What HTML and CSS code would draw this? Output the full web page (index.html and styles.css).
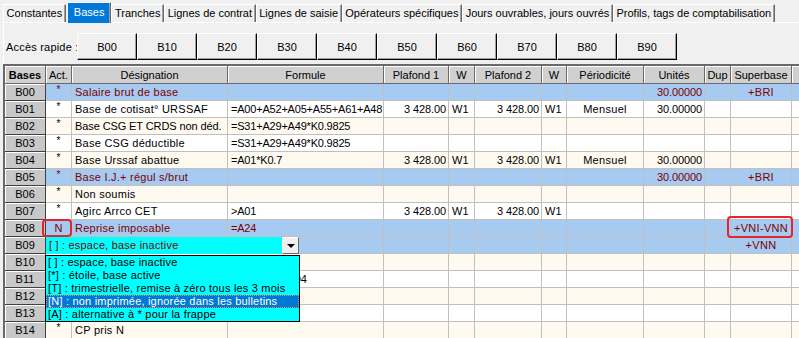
FILE: index.html
```html
<!DOCTYPE html>
<html>
	<head>
		<meta charset="UTF-8">
		<title>Bases</title>
		<link rel="stylesheet" href="styles.css">
	</head>
	<body>
		<div class="tabs">
			<span class="tab">Constantes</span>
			<span class="tab active">Bases</span>
			<span class="tab">Tranches</span>
			<span class="tab">Lignes de contrat</span>
			<span class="tab">Lignes de saisie</span>
			<span class="tab">Opérateurs spécifiques</span>
			<span class="tab">Jours ouvrables, jours ouvrés</span>
			<span class="tab">Profils, tags de comptabilisation</span>
		</div>
		<div class="panel">
			<div class="quick">
				<span class="quick-label">Accès rapide :</span>
				<button>B00</button>
				<button>B10</button>
				<button>B20</button>
				<button>B30</button>
				<button>B40</button>
				<button>B50</button>
				<button>B60</button>
				<button>B70</button>
				<button>B80</button>
				<button>B90</button>
			</div>
			<div class="grid-wrap">
				<table class="grid">
					<colgroup>
						<col style="width:41px">
						<col style="width:26px">
						<col style="width:156px">
						<col style="width:156px">
						<col style="width:65px">
						<col style="width:26px">
						<col style="width:67px">
						<col style="width:25px">
						<col style="width:77px">
						<col style="width:61px">
						<col style="width:26px">
						<col style="width:61px">
						<col style="width:60px">
					</colgroup>
					<thead>
						<tr>
							<th class="first">Bases</th>
							<th>Act.</th>
							<th>Désignation</th>
							<th>Formule</th>
							<th>Plafond 1</th>
							<th>W</th>
							<th>Plafond 2</th>
							<th>W</th>
							<th>Périodicité</th>
							<th>Unités</th>
							<th>Dup</th>
							<th>Superbase</th>
							<th>Dé</th>
						</tr>
					</thead>
					<tbody>
						<tr class="sel">
							<th>B00</th><td class="act">*</td><td class="lbl">Salaire brut de base</td><td class="fx"></td><td></td><td></td><td></td><td></td><td></td><td class="num">30.00000</td><td></td><td class="mid">+BRI</td><td></td>
						</tr>
						<tr>
							<th>B01</th><td class="act">*</td><td class="lbl">Base de cotisat° URSSAF</td><td class="fx">=A00+A52+A05+A55+A61+A48</td><td class="num">3 428.00</td><td>W1</td><td class="num">3 428.00</td><td>W1</td><td class="mid">Mensuel</td><td class="num">30.00000</td><td></td><td></td><td></td>
						</tr>
						<tr class="alt">
							<th>B02</th><td class="act">*</td><td class="lbl tight">Base CSG ET CRDS non déd.</td><td class="fx">=S31+A29+A49*K0.9825</td><td></td><td></td><td></td><td></td><td></td><td></td><td></td><td></td><td></td>
						</tr>
						<tr>
							<th>B03</th><td class="act">*</td><td class="lbl">Base CSG déductible</td><td class="fx">=S31+A29+A49*K0.9825</td><td></td><td></td><td></td><td></td><td></td><td></td><td></td><td></td><td></td>
						</tr>
						<tr class="alt">
							<th>B04</th><td class="act">*</td><td class="lbl">Base Urssaf abattue</td><td class="fx">=A01*K0.7</td><td class="num">3 428.00</td><td>W1</td><td class="num">3 428.00</td><td>W1</td><td class="mid">Mensuel</td><td class="num">30.00000</td><td></td><td></td><td></td>
						</tr>
						<tr class="sel">
							<th>B05</th><td class="act">*</td><td class="lbl">Base I.J.+ régul s/brut</td><td class="fx"></td><td></td><td></td><td></td><td></td><td></td><td class="num">30.00000</td><td></td><td class="mid">+BRI</td><td></td>
						</tr>
						<tr class="alt">
							<th>B06</th><td class="act">*</td><td class="lbl">Non soumis</td><td class="fx"></td><td></td><td></td><td></td><td></td><td></td><td></td><td></td><td></td><td></td>
						</tr>
						<tr>
							<th>B07</th><td class="act">*</td><td class="lbl">Agirc Arrco CET</td><td class="fx">&gt;A01</td><td class="num">3 428.00</td><td>W1</td><td class="num">3 428.00</td><td>W1</td><td></td><td></td><td></td><td></td><td></td>
						</tr>
						<tr class="sel">
							<th>B08</th><td class="act open"><span class="flag">N</span><span class="mark"></span></td><td class="lbl">Reprise imposable</td><td class="fx">=A24</td><td></td><td></td><td></td><td></td><td></td><td></td><td></td><td class="mid open">+VNI-VNN<span class="mark"></span></td><td></td>
						</tr>
						<tr class="sel">
							<th>B09</th>
							<td class="act open">
								<div class="combo">
									<span class="combo-text">[ ] : espace, base inactive</span>
									<span class="combo-btn"></span>
								</div>
								<ul class="droplist">
									<li>[ ] : espace, base inactive</li>
									<li>[*] : étoile, base active</li>
									<li>[T] : trimestrielle, remise à zéro tous les 3 mois</li>
									<li class="hot">[N] : non imprimée, ignorée dans les bulletins</li>
									<li>[A] : alternative à * pour la frappe</li>
								</ul>
							</td>
							<td class="lbl"></td><td class="fx"></td><td></td><td></td><td></td><td></td><td></td><td></td><td></td><td class="mid">+VNN</td><td></td>
						</tr>
						<tr class="alt">
							<th>B10</th><td class="act"></td><td class="lbl"></td><td class="fx"></td><td></td><td></td><td></td><td></td><td></td><td></td><td></td><td></td><td></td>
						</tr>
						<tr>
							<th>B11</th><td class="act"></td><td class="lbl"></td><td class="fx">=A01+A02+A04</td><td></td><td></td><td></td><td></td><td></td><td></td><td></td><td></td><td></td>
						</tr>
						<tr class="alt">
							<th>B12</th><td class="act"></td><td class="lbl"></td><td class="fx"></td><td></td><td></td><td></td><td></td><td></td><td></td><td></td><td></td><td></td>
						</tr>
						<tr>
							<th>B13</th><td class="act"></td><td class="lbl"></td><td class="fx"></td><td></td><td></td><td></td><td></td><td></td><td></td><td></td><td></td><td></td>
						</tr>
						<tr class="alt">
							<th>B14</th><td class="act">*</td><td class="lbl">CP pris N</td><td class="fx"></td><td></td><td></td><td></td><td></td><td></td><td></td><td></td><td></td><td></td>
						</tr>
					</tbody>
				</table>
			</div>
		</div>
	</body>
</html>
```

FILE: styles.css
```css
html, body {
	margin: 0;
	height: 100%;
	overflow: hidden;
}

body {
	background: #f0f0f0;
	font: 11px "Liberation Sans", Arial, sans-serif;
	color: #000;
}

/* onglets ---------------------------------------------------- */
.tabs {
	display: flex;
	align-items: flex-end;
	height: 22px;
	padding: 0 0 0 3px;
	box-sizing: border-box;
}

.tab {
	height: 18px;
	line-height: 16px;
	padding: 0 2.6px;
	border-top: 1px solid #fff;
	border-left: 1px solid #fff;
	border-right: 1px solid #696969;
	box-shadow: inset -1px 0 #a0a0a0;
	box-sizing: border-box;
	white-space: nowrap;
}

.tab.active {
	height: 21px;
	line-height: 18px;
	background: #0078d7;
	color: #fff;
	margin: 0 0 -1px 1px;
	padding: 0 6px;
}

/* panneau ---------------------------------------------------- */
.panel {
	border-top: 1px solid #fff;
	border-left: 1px solid #fff;
	margin-left: 3px;
	height: 316px;
}

.quick {
	display: flex;
	align-items: center;
	padding: 10px 0 0 2px;
	height: 27px;
}

.quick-label {
	width: 71px;
	white-space: nowrap;
	letter-spacing: 0.2px;
}

.quick button {
	width: 60px;
	height: 27px;
	font: 11px "Liberation Sans", Arial, sans-serif;
	background: #f0f0f0;
	border: 1px solid;
	border-color: #fff #000 #000 #fff;
	box-shadow: inset -1px -1px #a0a0a0;
	padding: 0;
}

/* grille ----------------------------------------------------- */
.grid-wrap {
	margin: 4px 0 0 -1px;
	border-top: 2px solid #696969;
	border-left: 2px solid #696969;
	box-shadow: inset 1px 1px #222;
	height: 280px;
	overflow: hidden;
}

.grid {
	table-layout: fixed;
	border-collapse: separate;
	border-spacing: 0;
	width: 847px;
}

.grid th,
.grid td {
	box-sizing: border-box;
	height: 17px;
	padding: 0 3px;
	border-right: 1px solid #c0c0c0;
	border-bottom: 1px solid #c0c0c0;
	white-space: nowrap;
	overflow: hidden;
	font-weight: normal;
	text-align: left;
	line-height: 15px;
}

.grid thead th {
	height: 18px;
	text-align: center;
	background: #d0d0d0;
	border-right: 1px solid #696969;
	border-bottom: 1px solid #696969;
	box-shadow: inset 1px 1px #fff;
	line-height: 16px;
	padding: 0 1px;
}

.grid thead th.first {
	font-weight: bold;
}

.grid tbody th {
	text-align: center;
	background: #c8c8c8;
	border-right: 1px solid #404040;
	border-bottom: 1px solid #404040;
	box-shadow: inset 1px 1px #fff;
}

.grid tbody tr td {
	background: #fff;
}

.grid tbody tr.alt td {
	background: #fffaf0;
}

.grid tbody tr.sel td {
	background: #a6caf0;
	color: #800000;
}

.grid td.lbl {
	letter-spacing: 0.25px;
}

.grid td.lbl.tight {
	letter-spacing: -0.1px;
}

.grid td.fx {
	letter-spacing: -0.2px;
}

.grid td.num {
	text-align: right;
	padding-right: 2px;
	letter-spacing: -0.1px;
}

.grid td.mid,
.grid td.act {
	text-align: center;
}

.grid td.mid {
	letter-spacing: 0.3px;
}

.grid td.act {
	font-size: 10px;
	line-height: 12px;
	vertical-align: top;
	padding: 0;
}

.grid td.open {
	overflow: visible;
	position: relative;
}

.flag {
	font-size: 11px;
	line-height: 16px;
}

.mark {
	position: absolute;
	left: -4px;
	right: -1px;
	top: -1px;
	bottom: -1px;
	border: 2px solid #e3262d;
	border-radius: 4px;
}

td.mid .mark {
	left: -4px;
	right: -2px;
	top: -4px;
	bottom: -2px;
}

/* liste déroulante ------------------------------------------- */
.combo {
	position: absolute;
	left: 0;
	top: 0;
	width: 253px;
	height: 17px;
	background: #00ffff;
	display: flex;
	z-index: 2;
	text-align: left;
}

.combo-text {
	flex: 1;
	font-size: 11px;
	line-height: 17px;
	padding-left: 3px;
	letter-spacing: 0.2px;
}

.combo-btn {
	width: 17px;
	height: 17px;
	box-sizing: border-box;
	background: #f0f0f0;
	border: 1px solid;
	border-color: #fff #696969 #696969 #fff;
	position: relative;
}

.combo-btn::after {
	content: "";
	position: absolute;
	left: 4px;
	top: 6px;
	border-left: 4px solid transparent;
	border-right: 4px solid transparent;
	border-top: 4px solid #000;
}

.droplist {
	position: absolute;
	left: -1px;
	top: 18px;
	width: 255px;
	margin: 0;
	padding: 0;
	list-style: none;
	background: #00ffff;
	border: 1px solid #000;
	box-sizing: border-box;
	z-index: 2;
	text-align: left;
	color: #000;
}

.droplist li {
	height: 13px;
	line-height: 13px;
	padding-left: 2px;
	font-size: 11px;
	letter-spacing: 0.2px;
	white-space: nowrap;
}

.droplist li.hot {
	background: #0078d7;
	color: #fff;
	outline: 1px dotted #ff8c1a;
	outline-offset: -1px;
}
```
